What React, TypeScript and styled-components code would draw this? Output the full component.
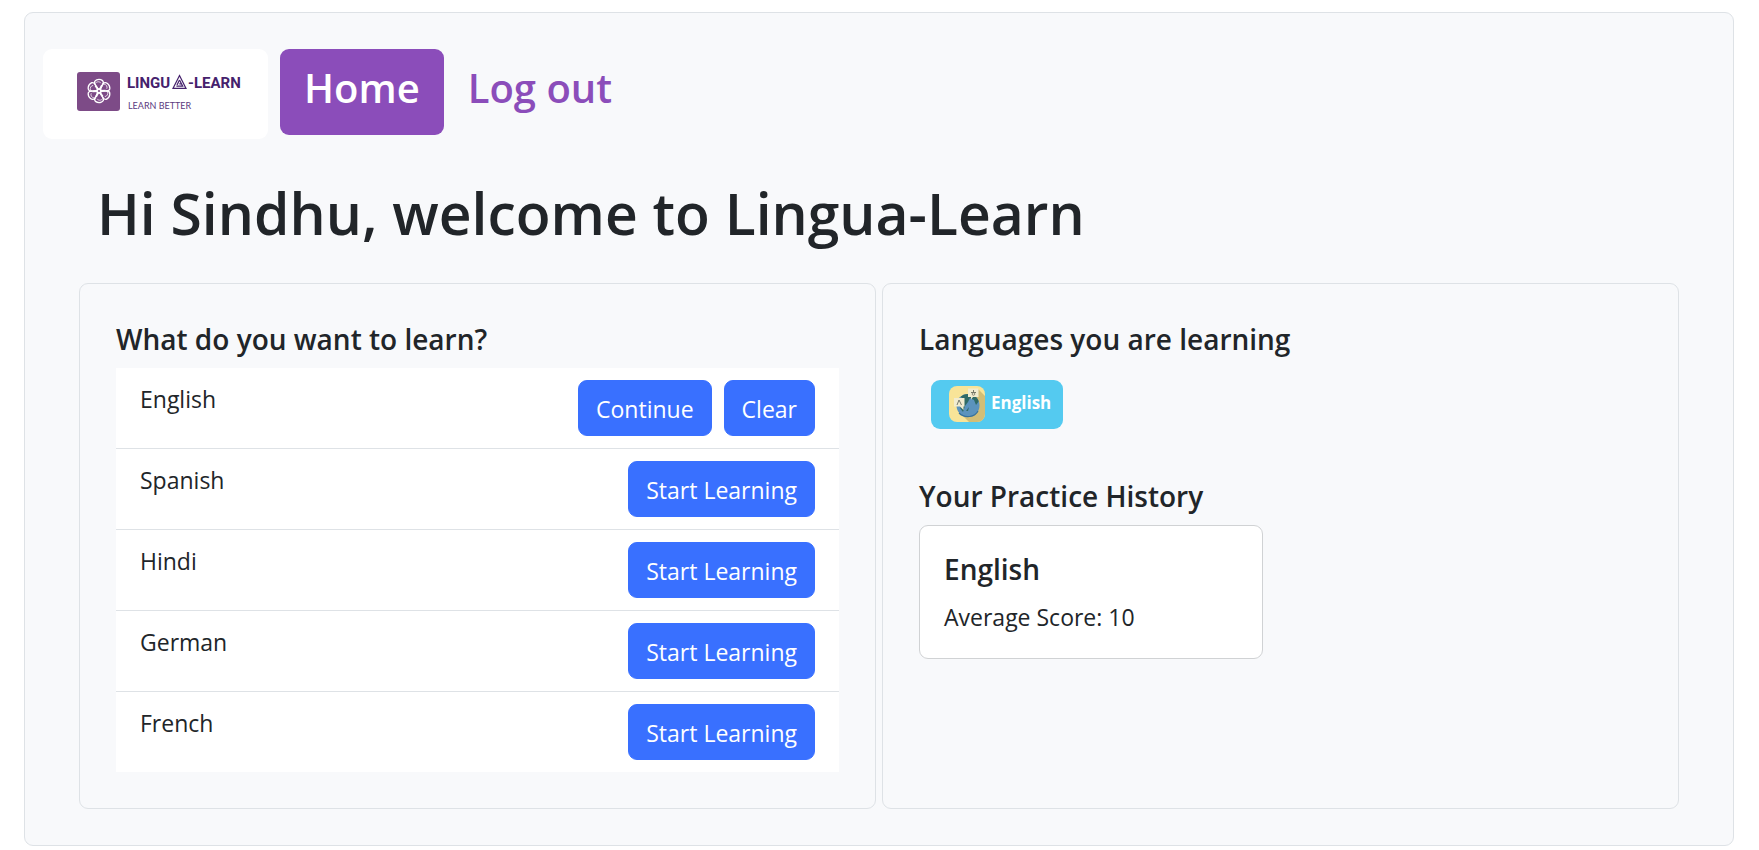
import React from 'react';
import styled, { createGlobalStyle, css } from 'styled-components';

const GlobalStyle = createGlobalStyle`
  *, *::before, *::after { box-sizing: border-box; }
  body {
    margin: 0;
    background: #fff;
    color: #212529;
    font-family: 'Open Sans', 'Noto Sans', sans-serif;
    font-size: 23px;
    line-height: 38px;
  }
`;

const Shell = styled.div`
  margin: 12px 25px 4px 24px;
  padding: 36px 18px;
  background: #f8f9fb;
  border: 1px solid #dee2e6;
  border-radius: 9px;
`;

const Nav = styled.nav`
  display: flex;
  align-items: flex-start;
`;

const Brand = styled.a`
  display: flex;
  margin-right: 12px;
  background: #fff;
  border-radius: 9px;
`;

const NavLink = styled.a<{ $active?: boolean }>`
  padding: 9px 24px 17px;
  border-radius: 9px;
  color: #8b4dba;
  font-size: 40px;
  font-weight: 600;
  line-height: 60px;
  text-decoration: none;
  ${(p) => p.$active && css`
    background: #8b4dba;
    color: #fff;
  `}
`;

const Main = styled.main`
  padding: 0 36px;
`;

const Title = styled.h1`
  margin: 38px 18px 34px;
  font-size: 57px;
  font-weight: 600;
  line-height: 72px;
`;

const Columns = styled.div`
  display: grid;
  grid-template-columns: 1fr 1fr;
  gap: 6px;
`;

const Panel = styled.section`
  padding: 36px;
  border: 1px solid #dee2e6;
  border-radius: 9px;
`;

const Heading = styled.h2`
  margin: 0 0 10px;
  font-size: 28px;
  font-weight: 600;
  line-height: 38px;
`;

const List = styled.ul`
  margin: 0;
  padding: 0;
  list-style: none;
  background: #fff;
`;

const Row = styled.li`
  display: flex;
  align-items: flex-start;
  gap: 12px;
  padding: 12px 24px;

  & + & { border-top: 1px solid #dee2e6; }
`;

const Language = styled.span`
  flex: 1;
`;

const Button = styled.button`
  padding: 10px 17px 8px;
  border: 1px solid #3970ff;
  border-radius: 9px;
  background: #3970ff;
  color: #fff;
  font: inherit;
  line-height: 36px;
`;

const Badge = styled.div`
  display: flex;
  align-items: flex-start;
  gap: 6px;
  width: fit-content;
  margin: 22px 12px 48px;
  padding: 6px 12px 7px 18px;
  border-radius: 9px;
  background: #54caf0;
  color: #fff;
  font-size: 17px;
  font-weight: 700;
  line-height: 34px;
`;

const Card = styled.article`
  width: 344px;
  max-width: 100%;
  padding: 24px 24px 22px;
  border: 1px solid #d0d2d4;
  border-radius: 9px;
  background: #fff;
`;

const Score = styled.p`
  margin: 0;
`;

const PETALS = [0, 60, 120, 180, 240, 300];

function Logo() {
  return (
    <svg width="225" height="90" viewBox="0 0 225 90" role="img" aria-label="Lingua-Learn">
      <rect x="34" y="23" width="43" height="39" rx="3" fill="#7d4b87" />
      <g transform="translate(56 42)" stroke="#fff" strokeWidth="1.3" fill="none">
        {PETALS.map((a) => (
          <g key={a} transform={`rotate(${a - 8})`}>
            <path d="M-0.500 -2 L-3.300 -7.500 C-4 -11.500 1.500 -13 5 -9.800 C5.800 -8.500 5.400 -6.500 4.200 -5.300" />
            <path d="M-2.800 -8 C-0.500 -10 2 -9.400 3 -7.500" strokeWidth="0.700" />
            <path d="M0 0 L-2.800 -6" strokeWidth="1.900" />
          </g>
        ))}
        <circle r="2.800" fill="#fff" stroke="none" />
        <circle r="1.100" fill="#7d4b87" stroke="none" />
      </g>
      <g fill="#45216c" fontFamily="Roboto, sans-serif" fontWeight="700" fontSize="15">
        <text x="84" y="39">LINGU</text>
        <text x="145" y="39">-LEARN</text>
      </g>
      <g fill="none" stroke="#45216c" strokeWidth="1.200">
        <path d="M136.500 26.500 L143 39.400 H130 Z" />
        <path d="M136.500 31 L139.700 37.200 H133.400" />
        <path d="M136.500 31 L134 36 M136.300 34.800 H138" />
      </g>
      <text x="85" y="60" fill="#5b3a80" fontFamily="Lato, sans-serif" fontSize="9">LEARN BETTER</text>
    </svg>
  );
}

function GlobeIcon() {
  return (
    <svg width="36" height="36" viewBox="0 0 36 36" aria-hidden="true">
      <defs>
        <clipPath id="tile"><rect width="36" height="36" rx="8" /></clipPath>
        <clipPath id="globe"><circle cx="19" cy="19.500" r="11.500" /></clipPath>
      </defs>
      <g clipPath="url(#tile)">
        <rect width="36" height="36" fill="#f8e498" />
        <path d="M29 3 L36 10 V36 H20 L9 25 Z" fill="#d2be76" />
        <circle cx="19" cy="19.500" r="11.500" fill="#5b93bd" />
        <g clipPath="url(#globe)" fill="#2f6b66">
          <path d="M10 9 L20 6 L23 11 L30 10 L30 15 L27 19 L25 14 L21 12 L19 16 L16 20 L14 26 L11 22 L15 17 L14 13 Z" />
          <path d="M17 25 L20 21 L19 25 Z" />
        </g>
        <path d="M10 27 C16 33 26 31 29 25" fill="none" stroke="#36729c" strokeWidth="1.200" />
        <path d="M19 2.500 H29.500 V11 H24 L22 13.500 V11 H19 Z" fill="#f1ecd0" />
        <path d="M5 12 H15.500 V20.500 H14.500 V24 L11 20.500 H5 Z" fill="#f1ecd0" />
        <path d="M8 19 L10 14 L12.500 19 M22 6.500 H27 M24.500 4 V6.500" stroke="#77796a" fill="none" />
        <circle cx="24.500" cy="8" r="1.300" stroke="#77796a" strokeWidth="0.800" fill="none" />
      </g>
    </svg>
  );
}

const LANGUAGES = [
  { name: 'English', actions: ['Continue', 'Clear'] },
  { name: 'Spanish', actions: ['Start Learning'] },
  { name: 'Hindi', actions: ['Start Learning'] },
  { name: 'German', actions: ['Start Learning'] },
  { name: 'French', actions: ['Start Learning'] },
];

export default function App() {
  return (
    <>
      <GlobalStyle />
      <Shell>
        <Nav>
          <Brand href="#"><Logo /></Brand>
          <NavLink href="#" $active aria-current="page">Home</NavLink>
          <NavLink href="#">Log out</NavLink>
        </Nav>
        <Main>
          <Title>Hi Sindhu, welcome to Lingua-Learn</Title>
          <Columns>
            <Panel>
              <Heading>What do you want to learn?</Heading>
              <List>
                {LANGUAGES.map((l) => (
                  <Row key={l.name}>
                    <Language>{l.name}</Language>
                    {l.actions.map((a) => (
                      <Button key={a} type="button">{a}</Button>
                    ))}
                  </Row>
                ))}
              </List>
            </Panel>
            <Panel>
              <Heading>Languages you are learning</Heading>
              <Badge><GlobeIcon />English</Badge>
              <Heading>Your Practice History</Heading>
              <Card>
                <Heading as="h3">English</Heading>
                <Score>Average Score: 10</Score>
              </Card>
            </Panel>
          </Columns>
        </Main>
      </Shell>
    </>
  );
}
